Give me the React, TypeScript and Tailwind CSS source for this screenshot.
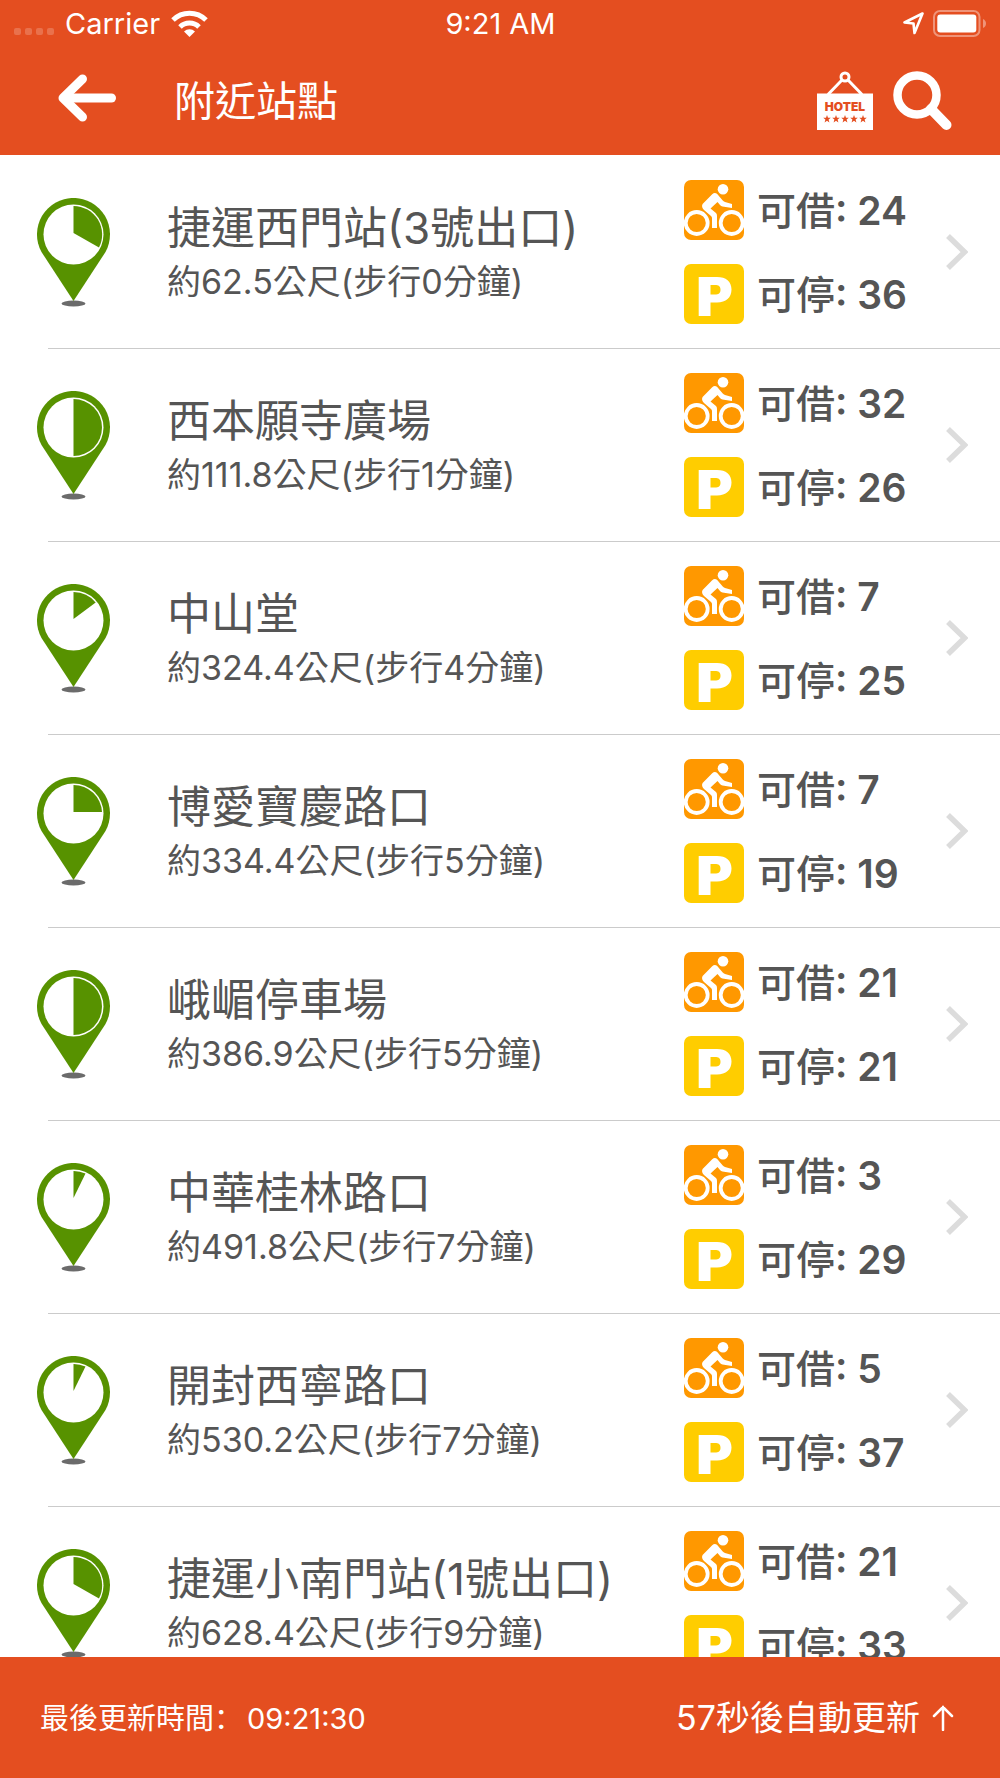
import { clsx } from 'clsx'

type Fill = 'sliver' | 'sixth' | 'quarter' | 'third' | 'half'

interface Station {
  name: string
  distance: string
  minutes: number
  bikes: number
  docks: number
  fill: Fill
}

const stations: Station[] = [
  { name: '捷運西門站(3號出口)', distance: '62.5', minutes: 0, bikes: 24, docks: 36, fill: 'third' },
  { name: '西本願寺廣場', distance: '111.8', minutes: 1, bikes: 32, docks: 26, fill: 'half' },
  { name: '中山堂', distance: '324.4', minutes: 4, bikes: 7, docks: 25, fill: 'sixth' },
  { name: '博愛寶慶路口', distance: '334.4', minutes: 5, bikes: 7, docks: 19, fill: 'quarter' },
  { name: '峨嵋停車場', distance: '386.9', minutes: 5, bikes: 21, docks: 21, fill: 'half' },
  { name: '中華桂林路口', distance: '491.8', minutes: 7, bikes: 3, docks: 29, fill: 'sliver' },
  { name: '開封西寧路口', distance: '530.2', minutes: 7, bikes: 5, docks: 37, fill: 'sliver' },
  { name: '捷運小南門站(1號出口)', distance: '628.4', minutes: 9, bikes: 21, docks: 33, fill: 'third' },
]

// where the pie slice ends on the inner circle of the pin
const sliceEnd: Record<Fill, string> = {
  sliver: '48.5 10.5',
  sixth: '58.7 18.5',
  quarter: '65 35',
  third: '62 49.5',
  half: '36.5 65',
}

function StationPin({ fill }: { fill: Fill }) {
  return (
    <svg viewBox="0 0 73 109" className="w-[73px] h-[109px] shrink-0" aria-hidden="true">
      <ellipse cx="36.5" cy="105.5" rx="12" ry="3" fill="#6b6b6b" />
      <path d="M36.5 103 4.5 54A36.5 36.5 0 1 1 68.5 54Z" fill="#579200" />
      <circle cx="36.5" cy="36.5" r="30" fill="#fff" />
      <path d={`M36.5 35V8A28.5 28.5 0 0 1 ${sliceEnd[fill]}Z`} fill="#579200" />
    </svg>
  )
}

function BikeIcon() {
  return (
    <svg viewBox="0 0 60 60" className="w-[60px] h-[60px] shrink-0" aria-hidden="true">
      <rect width="60" height="60" rx="7" fill="#ff9800" />
      <g fill="none" stroke="#fff" strokeWidth="3.8">
        <circle cx="12.7" cy="43" r="11" />
        <circle cx="47.7" cy="43" r="11" />
      </g>
      <circle cx="39" cy="9.3" r="5.3" fill="#fff" />
      <path
        d="M18.6 24 28.2 14.3Q30.5 12.2 33 13.7L38.5 20.3Q39.5 21.4 41 22L48 24V28L38.5 26.5Q37 26 36 25L33.5 22 26.5 28.5 32 33Q33 34 33 36V48H28V38Q28 36.8 27 36L20 30Q17 27 18.6 24Z"
        fill="#fff"
      />
    </svg>
  )
}

function ParkingIcon() {
  return (
    <svg viewBox="0 0 60 60" className="w-[60px] h-[60px] shrink-0" aria-hidden="true">
      <rect width="60" height="60" rx="7" fill="#ffcd00" />
      <path
        d="M14.7 13H33C42 13 47.5 17.5 47.5 25.5S42 38.5 33 38.5H26.5V52H14.7ZM26.5 21V30.5H31C34.5 30.5 36.5 29 36.5 25.7S34.5 21 31 21Z"
        fill="#fff"
        fillRule="evenodd"
      />
    </svg>
  )
}

function HotelIcon() {
  return (
    <svg viewBox="0 0 56 60" className="w-[56px] h-[60px]" aria-hidden="true">
      <g fill="none" stroke="#fff" strokeWidth="3">
        <circle cx="28" cy="6" r="4" />
        <path d="M11 23.5 25 9M45 23.5 31 9" />
      </g>
      <path d="M0 22.5H56V59H0Z" fill="#fff" />
      <text
        x="28"
        y="40"
        textAnchor="middle"
        fontFamily="Inter, sans-serif"
        fontSize="12"
        fontWeight="900"
        fill="#e44e20"
      >
        HOTEL
      </text>
      <g fill="#e44e20">
        {[10, 19, 28, 37, 46].map((x) => (
          <path
            key={x}
            transform={`translate(${x} 48)`}
            d="M0-4 1-1.2H3.8L1.6.6 2.4 3.4 0 1.7-2.4 3.4-1.6.6-3.8-1.2H-1Z"
          />
        ))}
      </g>
    </svg>
  )
}

function StatusBar() {
  return (
    <div className="grid grid-cols-3 items-center h-[47px] pl-[14px] pr-[13px] text-[29px] leading-none">
      <div className="flex items-center">
        <div className="flex gap-1 pt-4">
          {[0, 1, 2, 3].map((dot) => (
            <span key={dot} className="w-[7px] h-[7px] rounded-xs bg-white/20" />
          ))}
        </div>
        <span className="ml-[11px]">Carrier</span>
        <svg viewBox="0 0 37 27" className="w-[37px] h-[27px] ml-[11px]" aria-hidden="true">
          <g fill="none" stroke="#fff" strokeWidth="5">
            <path d="M2 10A23.5 23.5 0 0 1 35 10" />
            <path d="M9 17A13.5 13.5 0 0 1 28 17" />
          </g>
          <path d="M18.5 27 13 21.5A8 8 0 0 1 24 21.5Z" fill="#fff" />
        </svg>
      </div>
      <span className="text-center">9:21 AM</span>
      <div className="flex items-center justify-end">
        <svg viewBox="0 0 21 23" className="w-[21px] h-[23px]" aria-hidden="true">
          <path
            d="M19.5 1.5 1.5 10.5 10.5 11.5 11.5 21Z"
            fill="none"
            stroke="#fff"
            strokeWidth="2.6"
            strokeLinejoin="round"
          />
        </svg>
        <svg viewBox="0 0 54 27" className="w-[54px] h-[27px] ml-[9px]" aria-hidden="true">
          <rect x="1" y="1" width="45.5" height="25" rx="6" fill="none" stroke="#fff" strokeOpacity=".4" strokeWidth="2" />
          <rect x="4.3" y="4.5" width="39" height="18" rx="3" fill="#fff" />
          <path d="M50 9Q53 10.5 53 13.5T50 18Z" fill="#fff" fillOpacity=".4" />
        </svg>
      </div>
    </div>
  )
}

function NavBar() {
  return (
    <div className="flex items-center h-[108px] pl-[58px] pr-12">
      <button type="button" aria-label="返回">
        <svg viewBox="0 0 58 54" className="w-[58px] h-[54px]" aria-hidden="true">
          <g fill="none" stroke="#fff" strokeLinecap="round">
            <path d="M12 24H53.5" strokeWidth="9" />
            <path d="M24.5 5 5 24 24.5 43" strokeWidth="9" strokeLinejoin="round" />
          </g>
        </svg>
      </button>
      <h1 className="flex-1 ml-[58px] text-[41px] leading-none">附近站點</h1>
      <div className="flex items-center gap-5">
        <button type="button" aria-label="旅館">
          <HotelIcon />
        </button>
        <button type="button" aria-label="搜尋">
          <svg viewBox="0 0 59 60" className="w-[59px] h-[60px]" aria-hidden="true">
            <g fill="none" stroke="#fff">
              <circle cx="24" cy="24" r="19.5" strokeWidth="8.5" />
              <path d="M38 38 53.5 54" strokeWidth="10" strokeLinecap="round" />
            </g>
          </svg>
        </button>
      </div>
    </div>
  )
}

function StationRow({ station }: { station: Station }) {
  return (
    <li className="flex flex-col h-[193px] shrink-0">
      <button type="button" className="flex flex-1 items-center w-full pl-[37px] pr-8 text-left">
        <StationPin fill={station.fill} />
        <div className="flex-1 min-w-0 ml-[57px] pt-1 whitespace-nowrap">
          <div className="text-[44px] leading-[56px]">{station.name}</div>
          <div className="text-[34px] leading-[52px]">
            約{station.distance}公尺(步行{station.minutes}分鐘)
          </div>
        </div>
        <div className="flex flex-col gap-6 w-[262px] text-[39px] leading-[56px] font-semibold whitespace-nowrap">
          <div className="flex items-center gap-[13px]">
            <BikeIcon />
            <span className="pt-0.5">
              <span className="font-medium">可借</span>: {station.bikes}
            </span>
          </div>
          <div className="flex items-center gap-[13px]">
            <ParkingIcon />
            <span className="pt-0.5">
              <span className="font-medium">可停</span>: {station.docks}
            </span>
          </div>
        </div>
        <svg viewBox="0 0 22 36" className="w-[22px] h-9 shrink-0" aria-hidden="true">
          <path d="M2 2 18.5 18 2 34" fill="none" stroke="#dcdcdc" strokeWidth="5.5" />
        </svg>
      </button>
      <div className="h-px ml-12 bg-[#cbcbcb]" />
    </li>
  )
}

export default function App() {
  return (
    <div
      className={clsx(
        'flex flex-col h-screen overflow-hidden bg-white text-[#555555]',
        "font-[Inter,'Noto_Sans_CJK_TC',sans-serif]",
      )}
    >
      <header className="shrink-0 bg-[#e44e20] text-white">
        <StatusBar />
        <NavBar />
      </header>

      <main className="flex-1 min-h-0 pt-px overflow-hidden">
        <ul className="flex flex-col">
          {stations.map((station) => (
            <StationRow key={station.name} station={station} />
          ))}
        </ul>
      </main>

      <footer className="flex items-center justify-between shrink-0 h-[121px] pl-10 pr-[46px] bg-[#e44e20] text-white">
        <p className="text-[29px]">
          最後更新時間
          <span className="font-['Noto_Sans_CJK_SC',sans-serif]">：</span>
          <time className="ml-1">09:21:30</time>
        </p>
        <button type="button" className="flex items-center gap-3 text-[34px]">
          57秒後自動更新
          <svg viewBox="0 0 22 26" className="w-[22px] h-[26px]" aria-hidden="true">
            <path d="M11 25V2M2 11 11 2 20 11" fill="none" stroke="#fff" strokeWidth="2.5" strokeLinecap="round" />
          </svg>
        </button>
      </footer>
    </div>
  )
}
